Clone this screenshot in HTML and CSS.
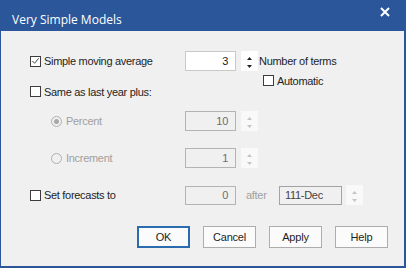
FILE: index.html
```html
<!DOCTYPE html>
<html lang="en">
<head>
    <meta charset="UTF-8">
    <title>Very Simple Models</title>
    <link rel="stylesheet" href="styles.css">
</head>
<body>
    <div class="window">
        <div class="titlebar">
            <span class="title">Very Simple Models</span>
            <svg class="close" width="10" height="10" viewBox="0 0 10 10">
                <path d="M1 1 L9 9 M9 1 L1 9" stroke="#fff" stroke-width="2"/>
            </svg>
        </div>

        <div class="content">
            <!-- Simple moving average -->
            <div class="row row-sma">
                <label class="check label-col">
                    <span class="box">
                        <svg width="10" height="10" viewBox="0 0 10 10">
                            <path d="M1.5 5 L4 7.5 L8.5 2" fill="none" stroke="#444" stroke-width="1.1"/>
                        </svg>
                    </span>
                    Simple moving average
                </label>
                <div class="field">3</div>
                <div class="spin">
                    <svg width="17" height="20" viewBox="0 0 17 20">
                        <path d="M6 9 L11 9 L8.5 6 Z" fill="#222"/>
                        <path d="M6 14 L11 14 L8.5 17 Z" fill="#222"/>
                    </svg>
                </div>
                <span class="hint">Number of terms</span>
            </div>

            <div class="row row-auto">
                <label class="check">
                    <span class="box"></span>
                    Automatic
                </label>
            </div>

            <div class="row row-same">
                <label class="check">
                    <span class="box"></span>
                    Same as last year plus:
                </label>
            </div>

            <!-- disabled choices -->
            <div class="row row-percent">
                <label class="radio label-sub disabled">
                    <span class="dot on"></span>
                    Percent
                </label>
                <div class="field off">10</div>
                <div class="spin off">
                    <svg width="17" height="20" viewBox="0 0 17 20">
                        <path d="M6 9 L11 9 L8.5 6 Z" fill="#c4c4c4"/>
                        <path d="M6 14 L11 14 L8.5 17 Z" fill="#c4c4c4"/>
                    </svg>
                </div>
            </div>

            <div class="row row-incr">
                <label class="radio label-sub disabled">
                    <span class="dot"></span>
                    Increment
                </label>
                <div class="field off">1</div>
                <div class="spin off">
                    <svg width="17" height="20" viewBox="0 0 17 20">
                        <path d="M6 9 L11 9 L8.5 6 Z" fill="#c4c4c4"/>
                        <path d="M6 14 L11 14 L8.5 17 Z" fill="#c4c4c4"/>
                    </svg>
                </div>
            </div>

            <div class="row row-forecast">
                <label class="check label-col">
                    <span class="box"></span>
                    Set forecasts to
                </label>
                <div class="field off">0</div>
                <span class="after">after</span>
                <div class="field off date">111-Dec</div>
                <div class="spin off">
                    <svg width="17" height="20" viewBox="0 0 17 20">
                        <path d="M6 9 L11 9 L8.5 6 Z" fill="#c4c4c4"/>
                        <path d="M6 14 L11 14 L8.5 17 Z" fill="#c4c4c4"/>
                    </svg>
                </div>
            </div>

            <div class="buttons">
                <button class="default">OK</button>
                <button>Cancel</button>
                <button>Apply</button>
                <button>Help</button>
            </div>
        </div>
    </div>
</body>
</html>
```

FILE: styles.css
```css
* {
    margin: 0;
    padding: 0;
    box-sizing: border-box;
}

body {
    font-family: 'Liberation Sans', Arial, sans-serif;
    font-size: 11px;
    letter-spacing: -0.3px;
    color: #1e1e1e;
    background: #f0f0f0;
    width: 406px;
    height: 268px;
    overflow: hidden;
}

.window {
    width: 406px;
    height: 268px;
    background: #f0f0f0;
    border-left: 1px solid #2b579a;
    border-right: 2px solid #2b579a;
    border-bottom: 2px solid #2b579a;
    display: flex;
    flex-direction: column;
}

.titlebar {
    height: 31px;
    background: #2b579a;
    display: flex;
    align-items: center;
    justify-content: space-between;
    padding: 3px 14px 0 11px;
    color: #fff;
}

.title {
    font-family: 'Open Sans', 'Noto Sans', sans-serif;
    font-size: 12px;
    letter-spacing: 0;
    padding-top: 5px;
}

.close {
    margin-top: -10px;
}

.content {
    padding-left: 29px;
    display: flex;
    flex-direction: column;
}

.row {
    display: flex;
    align-items: center;
    height: 20px;
}

.row-sma { margin-top: 20px; }
.row-auto { height: 11px; margin-top: 4px; padding-left: 233px; }
.row-same { height: 11px; }
.row-percent { margin-top: 14px; }
.row-incr { margin-top: 17px; }
.row-forecast { margin-top: 17px; }

.check, .radio {
    display: flex;
    align-items: center;
    white-space: nowrap;
}

.label-col { width: 155px; }
.label-sub { width: 134px; margin-left: 21px; }

.box {
    width: 11px;
    height: 11px;
    border: 1px solid #3c3c3c;
    background: #fff;
    margin-right: 3px;
    display: flex;
    align-items: center;
    justify-content: center;
}

.dot {
    width: 11px;
    height: 11px;
    border: 1px solid #b0b0b0;
    border-radius: 50%;
    margin-right: 4px;
    display: flex;
    align-items: center;
    justify-content: center;
}

.dot.on::after {
    content: '';
    width: 5px;
    height: 5px;
    border-radius: 50%;
    background: #a8a8a8;
}

.disabled { color: #a0a0a0; }

.field {
    width: 51px;
    height: 20px;
    background: #fff;
    border: 1px solid #c9c9c9;
    text-align: right;
    padding: 0 7px;
    line-height: 18px;
}

.field.off {
    background: #f0f0f0;
    border-color: #b4b4b4;
    color: #6d6d6d;
}

.row-forecast .field { height: 19px; line-height: 17px; }

.field.date {
    width: 63px;
    text-align: left;
    padding-left: 5px;
    border-color: #a3a3a3;
    color: #444;
}

.spin {
    width: 17px;
    height: 20px;
    background: #fff;
    margin-left: 5px;
}

.spin.off { background: #f9f9f9; }

.row-forecast .spin { margin-left: 4px; }

.hint { margin-left: 1px; }

.after {
    color: #a0a0a0;
    width: 43px;
    padding-left: 10px;
}

.buttons {
    display: flex;
    justify-content: flex-end;
    gap: 13px;
    margin-top: 21px;
    padding-right: 16px;
}

button {
    width: 53px;
    height: 22px;
    font-family: 'Liberation Sans', Arial, sans-serif;
    font-size: 11px;
    letter-spacing: -0.2px;
    color: #1e1e1e;
    background: #fbfbfb;
    border: 1px solid #adadad;
}

button.default {
    border: 2px solid #2b6cae;
}
```
